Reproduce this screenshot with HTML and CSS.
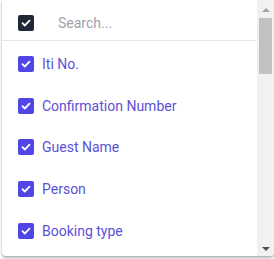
FILE: index.html
```html
<!DOCTYPE html>
<html lang="en">
<head>
    <meta charset="UTF-8">
    <meta name="viewport" content="width=device-width, initial-scale=1.0">
    <title>Columns</title>
    <link rel="stylesheet" href="styles.css">
</head>
<body>
    <div class="column-picker">
        <div class="picker-body">
            <div class="picker-head">
                <span class="check dark">
                    <svg viewBox="0 0 16 16"><path d="M4.5 8.2l2.3 2.3 4.7-4.8" /></svg>
                </span>
                <input type="text" class="search" placeholder="Search...">
            </div>
            <ul class="column-list">
                <li class="column-item"><span class="check"><svg viewBox="0 0 16 16"><path d="M4.5 8.2l2.3 2.3 4.7-4.8" /></svg></span>Iti No.</li>
                <li class="column-item"><span class="check"><svg viewBox="0 0 16 16"><path d="M4.5 8.2l2.3 2.3 4.7-4.8" /></svg></span>Confirmation Number</li>
                <li class="column-item"><span class="check"><svg viewBox="0 0 16 16"><path d="M4.5 8.2l2.3 2.3 4.7-4.8" /></svg></span>Guest Name</li>
                <li class="column-item"><span class="check"><svg viewBox="0 0 16 16"><path d="M4.5 8.2l2.3 2.3 4.7-4.8" /></svg></span>Person</li>
                <li class="column-item"><span class="check"><svg viewBox="0 0 16 16"><path d="M4.5 8.2l2.3 2.3 4.7-4.8" /></svg></span>Booking type</li>
            </ul>
        </div>
        <!-- list scrollbar -->
        <div class="scrollbar">
            <span class="arrow up"></span>
            <div class="track"><div class="thumb"></div></div>
            <span class="arrow down"></span>
        </div>
    </div>
</body>
</html>
```

FILE: styles.css
```css
html, body {
    margin: 0;
    height: 100%;
    overflow: hidden;
}

body {
    font-family: Roboto, sans-serif;
    background-color: #ffffff;
}

.column-picker {
    display: flex;
    margin-left: 2px;
    width: 272px;
    height: 256px;
    background-color: #fff;
    border-radius: 0 0 4px 4px;
    box-shadow: 0 2px 3px rgba(0, 0, 0, 0.3), 0 0 2px rgba(0, 0, 0, 0.08);
    overflow: hidden;
}

.picker-body {
    flex: 1;
    min-width: 0;
}

.picker-head {
    display: flex;
    align-items: center;
    height: 41px;
    padding: 5px 0 0 16px;
    box-sizing: border-box;
    border-bottom: 1px solid #e5e7eb;
}

.search {
    border: none;
    outline: none;
    font-family: inherit;
    font-size: 14px;
    margin-left: 24px;
    padding: 0;
    width: 180px;
    color: #374151;
}

.search::placeholder {
    color: #9ca3af;
}

.check {
    width: 16px;
    height: 16px;
    border-radius: 2px;
    background-color: #4f46e5;
    display: inline-flex;
    flex-shrink: 0;
    margin-right: 8px;
}

.check.dark {
    background-color: #1f2937;
    margin-right: 0;
}

.check svg {
    width: 16px;
    height: 16px;
    fill: none;
    stroke: #fff;
    stroke-width: 1.8;
    stroke-linecap: round;
    stroke-linejoin: round;
}

.column-list {
    list-style: none;
    margin: 0;
    padding: 2px 0 0 0;
}

.column-item {
    display: flex;
    align-items: center;
    height: 41.8px;
    padding-left: 16px;
    font-size: 14px;
    color: #5b51d8;
}

/* Scrollbar */
.scrollbar {
    width: 17px;
    flex-shrink: 0;
    background-color: #f1f1f1;
    display: flex;
    flex-direction: column;
    align-items: center;
}

.arrow {
    width: 0;
    height: 0;
    border-left: 4px solid transparent;
    border-right: 4px solid transparent;
}

.arrow.up {
    margin-top: 8px;
    border-bottom: 4px solid #a3a3a3;
}

.arrow.down {
    margin-bottom: 5px;
    border-top: 4px solid #505050;
}

.track {
    flex: 1;
    width: 100%;
    padding: 6px 2px 0 2px;
    box-sizing: border-box;
}

.thumb {
    height: 56px;
    background-color: #c1c1c1;
}
```
